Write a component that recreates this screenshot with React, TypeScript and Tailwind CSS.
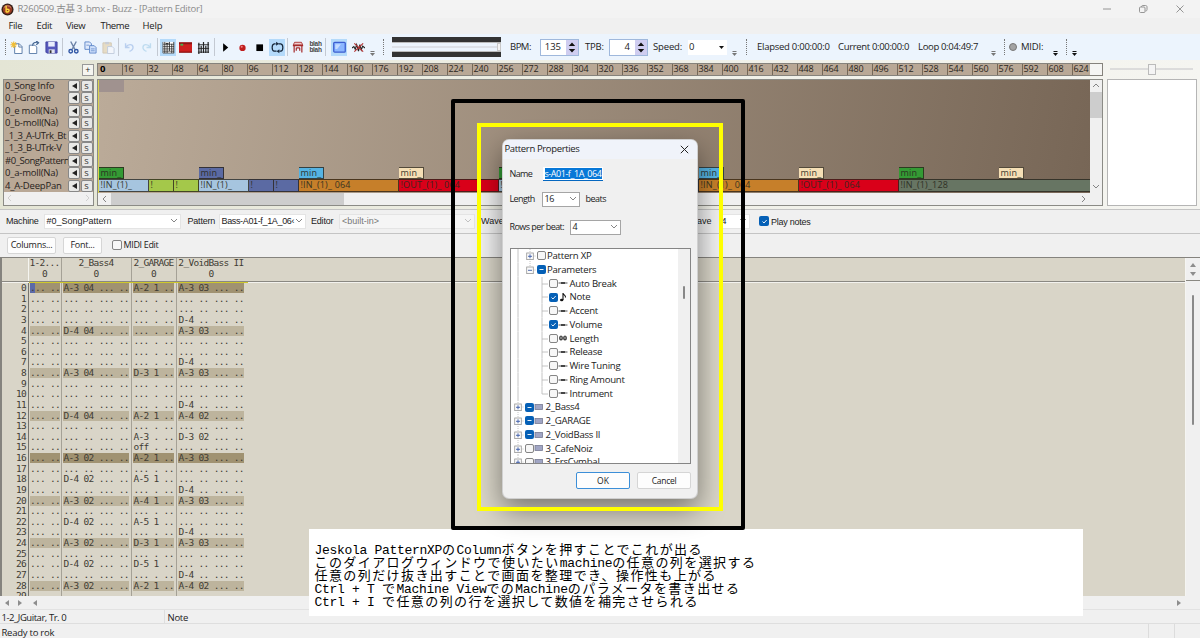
import type { ReactNode } from "react";

const UI = "font-['Open_Sans','Noto_Sans','Noto_Sans_CJK_JP',sans-serif]";

function Cell({ w, children, on }: { w: string; children?: ReactNode; on?: boolean }) {
  return (
    <div className={`${w} flex h-[17px] shrink-0 items-center justify-center`}>
      <div className={`flex h-[17px] w-[16px] shrink-0 items-center justify-center ${on ? "bg-[#b4dafa]" : ""}`}>{children}</div>
    </div>
  );
}

const Sep = ({ w }: { w: string }) => (
  <div className={`${w} flex shrink-0 justify-center`}>
    <div className="h-[18px] w-px bg-[#c3c9d2]" />
  </div>
);

const Grip = ({ w = "w-[6px]" }: { w?: string }) => (
  <div className={`${w} flex shrink-0 justify-center`}>
    <div className="h-[16px] w-0 border-l-[1.5px] border-dotted border-[#777]" />
  </div>
);

const Overflow = ({ w = "w-[8px]", c = "#777" }: { w?: string; c?: string }) => (
  <div className={`${w} flex h-full shrink-0 items-end justify-center pb-[4px]`}>
    <svg width="5" height="5" viewBox="0 0 5 5">
      <path d="M.5 .5h4" stroke={c} />
      <path d="M0 2h5L2.5 5z" fill={c} />
    </svg>
  </div>
);

const Chevron = ({ c = "#777", d = "M1 2l3 3 3-3" }: { c?: string; d?: string }) => (
  <svg width="8" height="8" viewBox="0 0 8 8" fill="none" className="shrink-0">
    <path d={d} stroke={c} strokeWidth="0.9" />
  </svg>
);

const Ic = ({ children, s = 13 }: { children: ReactNode; s?: number }) => (
  <svg width={s} height={s} viewBox="0 0 14 14" fill="none" className="shrink-0">
    {children}
  </svg>
);

function Spin({ v }: { v: string }) {
  return (
    <div className="flex h-[17px] w-[39px] shrink-0 border border-[#9fb8dc] bg-white">
      <span className="flex-1 pr-[5px] text-right leading-[14px]">{v}</span>
      <div className="flex w-[12px] items-center justify-center bg-[#cfcdf0]">
        <svg width="8" height="13" viewBox="0 0 8 13">
          <path d="M4 1.5l3.2 3.4H.8zM4 11.5l3.2-3.4H.8z" fill="#111" />
        </svg>
      </div>
    </div>
  );
}

function Toolbar() {
  return (
    <div className="flex h-[26px] shrink-0 items-center bg-[#ecf4fd] text-[9.500px] text-[#222]">
      <div className="w-[3px]" />
      <Grip w="w-[5px]" />
      <Cell w="w-[17px]">
        <Ic>
          <path d="M5 3h5l3 3v7.500H5z" fill="#fff" stroke="#5679a6" />
          <path d="M9.500 3v3.500H13" stroke="#5679a6" />
          <path d="M4 .5v7M.5 4h7M1.500 1.500l5 5M6.500 1.500l-5 5" stroke="#f0bd35" strokeWidth="1.200" />
        </Ic>
      </Cell>
      <Cell w="w-[17px]">
        <Ic>
          <path d="M2.500 4.500h6l2 2v7h-8z" fill="#fff" stroke="#5679a6" />
          <path d="M6 5c0-3 3-4 5-3.500M10 0l2.500 1.800L10 4" stroke="#41638f" strokeWidth="1.200" />
        </Ic>
      </Cell>
      <Cell w="w-[19px]">
        <Ic>
          <path d="M1 1h12v12H2l-1-1z" fill="#5659bd" stroke="#3f3f9c" />
          <path d="M3.500 1h7v5h-7z" fill="#e9edfc" />
          <path d="M4 9h6.500v4H4z" fill="#dfe2ef" />
          <path d="M5 10h2v3H5z" fill="#333" />
        </Ic>
      </Cell>
      <Sep w="w-[3px]" />
      <Cell w="w-[18px]">
        <Ic>
          <path d="M4 .5l4.500 8.500M10 .5L5.500 9" stroke="#6c83a8" strokeWidth="1.500" />
          <circle cx="4" cy="11" r="1.900" stroke="#2f56a5" strokeWidth="1.500" />
          <circle cx="10" cy="11" r="1.900" stroke="#2f56a5" strokeWidth="1.500" />
        </Ic>
      </Cell>
      <Cell w="w-[17px]">
        <Ic>
          <path d="M1 1h5l2 2v6H1z" fill="#dfeafc" stroke="#5e87c9" />
          <path d="M6 5h5l2 2v6H6z" fill="#cfe0fb" stroke="#5e87c9" />
          <path d="M7.500 8.500h4M7.500 10.500h4M2.500 4.500h3" stroke="#5e87c9" strokeWidth=".8" />
        </Ic>
      </Cell>
      <Cell w="w-[18px]">
        <Ic>
          <path d="M1 2h9v11H1z" fill="#e6dcc5" stroke="#d2c8b4" />
          <path d="M3.500 1h4v2.500h-4z" fill="#c9cdd5" />
          <path d="M6 6h5l2 2v5.500H6z" fill="#f3f6fb" stroke="#c0cbdc" />
        </Ic>
      </Cell>
      <Sep w="w-[3px]" />
      <Cell w="w-[18px]">
        <Ic s={11}>
          <path d="M2 1.500V7h5M2.500 6.500C5 2.500 11 2 11.500 6.500c.2 3-2 4.500-4.500 5.500" stroke="#b9cfef" strokeWidth="1.800" />
        </Ic>
      </Cell>
      <Cell w="w-[17px]">
        <Ic s={11}>
          <path d="M12 1.500V7H7M11.500 6.500C9 2.500 3 2 2.500 6.500c-.2 3 2 4.500 4.500 5.500" stroke="#bfdcf0" strokeWidth="1.800" />
        </Ic>
      </Cell>
      <Sep w="w-[4px]" />
      <Cell w="w-[18px]" on>
        <Ic>
          <path d="M1 1h12v12H1z" fill="#fff" />
          <path d="M1 1v12h12M1 3.500h12M1 6h12M1 8.500h12M1 11h12" stroke="#444" strokeWidth=".8" />
          <path d="M3 1v12M5.500 3v10M8 1v10M10.500 3v10M12.700 1v12" stroke="#222" strokeWidth=".9" />
          <path d="M4 2h3v1.500H4z" fill="#333" />
        </Ic>
      </Cell>
      <Cell w="w-[17px]">
        <Ic>
          <path d="M0 1.500h14v11H0z" fill="#ce1f1f" />
          <path d="M0 1.500h14v2H0z" fill="#8b1515" />
          <path d="M1.500 3h3v2h-3z" fill="#46b34d" />
          <path d="M0 12h14" stroke="#771111" />
        </Ic>
      </Cell>
      <Cell w="w-[18px]">
        <Ic>
          <path d="M1 4h12M1 8h12M1 12h12" stroke="#333" strokeWidth="1" />
          <path d="M2 2v12M4.500 5v8M7 1v12M9.500 5v8M12 1v12" stroke="#222" strokeWidth="1.300" />
        </Ic>
      </Cell>
      <Sep w="w-[4px]" />
      <Cell w="w-[18px]">
        <Ic s={11}>
          <path d="M4 1.500L10.500 7 4 12.500z" fill="#000" />
        </Ic>
      </Cell>
      <Cell w="w-[16px]">
        <Ic s={11}>
          <circle cx="7" cy="7.500" r="4" fill="#c01d1d" />
          <circle cx="6" cy="6" r="1.300" fill="#ef8080" />
        </Ic>
      </Cell>
      <Cell w="w-[18px]">
        <Ic s={11}>
          <path d="M3 3h8.500v8.500H3z" fill="#000" />
        </Ic>
      </Cell>
      <Cell w="w-[18px]" on>
        <Ic>
          <path d="M5 3H3.500C.5 3.500.5 10.500 3.500 11H6M9 11h1.500c3-.5 3-7.500 0-8H8" stroke="#16263a" strokeWidth="1.300" />
          <path d="M5.500 .8L8.500 3 5.500 5.200zM9 8.800L6 11l3 2.200z" fill="#16263a" />
        </Ic>
      </Cell>
      <Sep w="w-[3px]" />
      <Cell w="w-[18px]">
        <Ic s={12}>
          <path d="M1.500 4.500L3 1.500h8l1.500 3z" fill="#f3caca" stroke="#a52a2a" />
          <path d="M1 5.500h12M2.500 5.500v8M11.500 5.500v8M5 8v3.500M9 8v3.500M5 8h4" stroke="#a52a2a" strokeWidth="1.400" />
        </Ic>
      </Cell>
      <Cell w="w-[17px]">
        <div className="text-center font-['Liberation_Sans',sans-serif] text-[6.500px] leading-[6.500px] font-bold tracking-[-0.300px] text-[#444]">
          <div>blah</div>
          <div>blah</div>
        </div>
      </Cell>
      <Sep w="w-[3px]" />
      <div className="w-[3px]" />
      <Cell w="w-[18px]" on>
        <Ic>
          <rect x=".8" y="1.500" width="12.400" height="10.500" rx="1" fill="#8bb6ff" stroke="#3c5ed0" strokeWidth="1.400" />
          <path d="M2.500 3.500h6l-4 5h-2z" fill="#c6dcff" />
        </Ic>
      </Cell>
      <Cell w="w-[20px]">
        <Ic>
          <path d="M0 7.500l2-1.500 1.500 3L5 4l2 7 1.500-7L10 9.500l1.500-4L14 7.500" stroke="#222" strokeWidth="1.200" />
          <path d="M2.500 2.500l9.500 9M12 2.500l-9.500 9" stroke="#b53434" strokeWidth="1.300" />
        </Ic>
      </Cell>
      <Overflow w="w-[9px]" />
      <div className="w-[3px]" />
      <Grip />
      <div className="ml-[6px] flex h-[20px] w-[109px] shrink-0 flex-col justify-between">
        <div className="h-[6px] border-b border-[#bbb] bg-[#333]" />
        <div className="flex h-[8px] items-center">
          <div className="h-[2px] flex-1 bg-[#dde1e8]" />
          <div className="h-[8px] w-[4px] border border-[#c8c8c8] bg-[#f4f4f4]" />
        </div>
        <div className="h-[6px] border-t border-[#bbb] bg-[#333]" />
      </div>
      <span className="w-[39px] shrink-0 pl-[9px] tracking-[-0.500px]">BPM:</span>
      <Spin v="135" />
      <span className="w-[30px] shrink-0 pl-[6px] tracking-[-0.200px]">TPB:</span>
      <Spin v="4" />
      <span className="w-[40px] shrink-0 pl-[5px] tracking-[-0.150px] whitespace-nowrap">Speed:</span>
      <div className="flex h-[15px] w-[39px] shrink-0 items-center justify-between bg-white pr-[3px] pl-px">
        <span className="-mt-px leading-[13px]">0</span>
        <svg width="5" height="3" viewBox="0 0 5 3">
          <path d="M0 0h5L2.500 3z" fill="#111" />
        </svg>
      </div>
      <div className="w-[3px]" />
      <Overflow />
      <div className="w-[5px]" />
      <Grip />
      <span className="w-[89px] shrink-0 pl-[8px] tracking-[-0.260px] whitespace-nowrap">Elapsed 0:00:00:0</span>
      <span className="w-[80px] shrink-0 tracking-[-0.330px] whitespace-nowrap">Current 0:00:00:0</span>
      <span className="w-[71px] shrink-0 tracking-[-0.330px] whitespace-nowrap">Loop 0:04:49:7</span>
      <Overflow />
      <div className="w-[4px]" />
      <Grip />
      <div className="ml-[2px] h-[8px] w-[8px] shrink-0 rounded-full border border-[#777] bg-[#a3a3a3]" />
      <span className="w-[34px] shrink-0 pl-[4px] tracking-[-0.200px]">MIDI:</span>
      <Overflow c="#111" />
      <div className="w-[4px]" />
      <Grip />
      <Overflow w="w-[10px]" c="#111" />
    </div>
  );
}

const tracks = ["0_Song Info", "0_I-Groove", "0_e moll(Na)", "0_b-moll(Na)", "_1_3_A-UTrk_Bt", "_1_3_B-UTrk-V", "#0_SongPattern", "0_a-moll(Na)", "4_A-DeepPan"];

type Clip = [width: string, color: string, label: string];
const minClips: Clip[] = [
  ["w-[25px]", "bg-[#349a34]", "min_"],
  ["w-[75px]", "", ""],
  ["w-[25px]", "bg-[#5b6aa3]", "min_"],
  ["w-[75px]", "", ""],
  ["w-[25px]", "bg-[#55b3e2]", "min_"],
  ["w-[75px]", "", ""],
  ["w-[25px]", "bg-[#f5dfb5]", "min_"],
  ["w-[75px]", "", ""],
  ["w-[25px]", "bg-[#349a34]", " "],
  ["w-[175px]", "", ""],
  ["w-[25px]", "bg-[#55b3e2]", "min_"],
  ["w-[75px]", "", ""],
  ["w-[25px]", "bg-[#f5dfb5]", "min_"],
  ["w-[75px]", "", ""],
  ["w-[25px]", "bg-[#349a34]", "min_"],
  ["w-[75px]", "", ""],
  ["w-[25px]", "bg-[#f5dfb5]", "min_"],
];
const songClips: Clip[] = [
  ["w-[50px]", "bg-[#a6c5df]", "!IN_(1)_"],
  ["w-[25px]", "bg-[#a4c84a]", "!"],
  ["w-[25px]", "bg-[#a4c84a]", "!"],
  ["w-[50px]", "bg-[#a6c5df]", "!IN_(1)_"],
  ["w-[25px]", "bg-[#5b6aa3]", "!"],
  ["w-[25px]", "bg-[#5b6aa3]", "!"],
  ["w-[100px]", "bg-[#c67f2a]", "!IN_(1)_ 064"],
  ["w-[100px]", "bg-[#d90019]", "!OUT_(1)_ 064"],
  ["w-[100px]", "bg-[#a6c5df]", "!"],
  ["w-[100px]", "bg-[#5b6aa3]", " "],
  ["w-[100px]", "bg-[#c67f2a]", "!IN_(1)_ 064"],
  ["w-[100px]", "bg-[#d90019]", "!OUT_(1)_ 064"],
  ["w-[192px]", "bg-[#677563]", "!IN_(1)_128"],
];

function Clips({ list }: { list: Clip[] }) {
  return (
    <div className="flex h-[12.500px] shrink-0 text-[9px] leading-[9px] text-[#2b2b20]">
      {list.map(([w, c, t], i) =>
        t ? (
          <div key={i} className={`${w} ${c} shrink-0 border-t border-r border-b border-[#2a241c]/80 pl-[1.500px] tracking-[0.200px] whitespace-nowrap`}>
            <span className="opacity-90">{t}</span>
          </div>
        ) : (
          <div key={i} className={`${w} shrink-0`} />
        ),
      )}
    </div>
  );
}

const beats = Array.from({ length: 40 }, (_, i) => i * 16);

function Sequencer() {
  return (
    <div className="flex h-[149px] shrink-0 bg-linear-to-r from-[#e4e5d5] via-[#efefe6] to-[#f5f5f1] pt-[2.500px]">
      <div className="flex w-[97px] shrink-0 flex-col pl-[3px]">
        <div className="flex h-[16px] justify-end pr-[3.500px]">
          <div className="mt-px h-[12px] w-[11.500px] border border-[#999] bg-[#f5f5f0] text-center text-[9px] leading-[10px]">+</div>
        </div>
        <div className="flex h-[127px] w-[91px] flex-col border border-[#8b8b86] bg-[#b9a896]">
          {tracks.map((t) => (
            <div key={t} className="flex h-[12.500px] items-center text-[9.500px] text-[#27221c]">
              <span className={`w-[64px] shrink-0 pl-[1px] leading-[12px] whitespace-nowrap ${t.length > 12 ? "tracking-[-0.450px]" : "tracking-[-0.200px]"}`}>{t}</span>
              <div className="flex h-[12px] w-[12px] shrink-0 items-center justify-center rounded-[2px] border border-[#888] bg-[#e8e8e6]">
                <svg width="5" height="6" viewBox="0 0 5 6">
                  <path d="M5 0v6L0 3z" fill="#222" />
                </svg>
              </div>
              <div className="ml-[0.500px] h-[12px] w-[12px] shrink-0 rounded-[2px] border border-[#888] bg-[#e8e8e6] text-center text-[8px] leading-[10px]">S</div>
            </div>
          ))}
          <div className="flex flex-1 items-center justify-between bg-[#f0f0f0] px-[2px]">
            <Chevron c="#ccc" d="M5 1L2 4l3 3" />
            <Chevron c="#ccc" d="M3 1l3 3-3 3" />
          </div>
        </div>
      </div>
      <div className="flex w-[1006px] shrink-0 flex-col">
        <div className="flex h-[13px] w-[1006px] border border-[#85827c] bg-[#f5f5f3] text-[9px] leading-[10px] text-[#2c2620]">
          {beats.map((b) => (
            <div
              key={b}
              className={`h-full shrink-0 border-r border-[#746859] bg-[#b9a896] ${b === 0 ? "w-[25px] pl-[2px] text-[9.500px] font-bold text-black" : b === 624 ? "w-[17px] border-r-0 pl-[0.500px] tracking-[-0.100px]" : "w-[25px] pl-[0.500px] tracking-[-0.100px]"}`}
            >
              {b}
            </div>
          ))}
        </div>
        <div className="h-[3px]" />
        <div className="flex h-[127px] w-[1006px] flex-col border border-[#8b8b86]">
          <div className="flex h-[113px]">
            <div className="flex w-[992px] flex-col overflow-hidden border-l border-[#d9d34a] bg-linear-[100deg] from-[#bbab99] to-[#776656]">
              <div className="h-[12.500px] w-[25px] bg-[#a0928f]" />
              <div className="h-[74.500px]" />
              <Clips list={minClips} />
              <Clips list={songClips} />
            </div>
            <div className="flex w-[12px] flex-col items-center bg-[#f0f0f0] pb-[2px]">
              <div className="flex h-[12px] shrink-0 items-center">
                <Chevron d="M1 5l3-3 3 3" />
              </div>
              <div className="h-[26px] w-full shrink-0 bg-[#cdcdcd]" />
              <div className="flex-1" />
              <Chevron />
            </div>
          </div>
          <div className="flex h-[12px] items-center bg-[#f0f0f0]">
            <div className="flex w-[13px] justify-center">
              <Chevron d="M5 1L2 4l3 3" />
            </div>
            <div className="h-full w-[233px] bg-[#cdcdcd]" />
            <div className="flex-1" />
            <div className="mr-[15px]">
              <Chevron d="M3 1l3 3-3 3" />
            </div>
          </div>
        </div>
      </div>
      <div className="flex flex-col pl-[3.500px]">
        <div className="flex h-[16px] items-center px-[3px] pb-[3px]">
          <div className="h-[2px] w-[38px] bg-[#dcdcdc]" />
          <div className="h-[11px] w-[8px] border border-[#bbb] bg-[#f4f4f4]" />
          <div className="h-[2px] w-[37px] bg-[#dcdcdc]" />
        </div>
        <div className="h-[127px] w-[90px] border border-[#b5b5b5] bg-white" />
      </div>
    </div>
  );
}

function Select({ w, v, dim }: { w: string; v: string; dim?: boolean }) {
  return (
    <div className={`${w} flex h-[15px] shrink-0 items-center justify-between border border-[#e4e4e4] pr-[2px] pl-[2px] whitespace-nowrap ${dim ? "bg-[#f5f5f5] text-[#777]" : "bg-white"}`}>
      <span className={v.length > 15 ? "tracking-[-0.350px]" : ""}>{v}</span>
      <Chevron c={dim ? "#bbb" : "#777"} />
    </div>
  );
}

function Check({ state, s = "h-[9px] w-[9px]" }: { state?: "on" | "mixed"; s?: string }) {
  return (
    <div className={`${s} flex shrink-0 items-center justify-center rounded-[2px] ${state ? "bg-[#0560b6]" : "border border-[#858585] bg-[#f7f7f7]"}`}>
      {state && (
        <svg width="7" height="7" viewBox="0 0 7 7" fill="none">
          <path d={state === "on" ? "M1.500 3.500l1.500 1.500 2.700-3" : "M1.500 3.500h4"} stroke="#fff" strokeWidth=".9" />
        </svg>
      )}
    </div>
  );
}

const E1 = "... ..";
const E2 = "... .. ... ..";
const E3 = "... . ..";
const pattern: Record<number, [string?, string?, string?]> = {
  0: ["A-3 04 ... ..", "A-2 1 ..", "A-3 03 ... .."],
  3: [, , "D-4 .. ... .."],
  4: ["D-4 04 ... ..", , "A-3 03 ... .."],
  7: [, , "D-4 .. ... .."],
  8: ["A-3 04 ... ..", "D-3 1 ..", "A-3 03 ... .."],
  11: [, , "D-4 .. ... .."],
  12: ["D-4 04 ... ..", "A-2 1 ..", "A-4 02 ... .."],
  14: [, "A-3 . ..", "D-3 02 ... .."],
  15: [, "off . .."],
  16: ["A-3 02 ... ..", "A-2 1 ..", "A-3 03 ... .."],
  18: ["D-4 02 ... ..", "A-5 1 .."],
  19: [, , "D-4 .. ... .."],
  20: ["A-3 02 ... ..", "A-4 1 ..", "A-3 03 ... .."],
  22: ["D-4 02 ... ..", "A-5 1 .."],
  23: [, , "D-4 .. ... .."],
  24: ["A-3 02 ... ..", "D-3 1 ..", "A-3 03 ... .."],
  26: ["D-4 02 ... ..", "D-5 1 .."],
  27: [, , "D-4 .. ... .."],
  28: ["A-3 02 ... ..", "A-2 1 ..", "A-4 02 ... .."],
};

const Tri = ({ d }: { d: string }) => (
  <svg width="6" height="6" viewBox="0 0 6 6" className="shrink-0">
    <path d={d} fill="#8d8d8d" />
  </svg>
);
const LEFT = "M5 0v6L1 3z";
const RIGHT = "M1 0v6l4-3z";

function PatternEditor() {
  const heads = [
    ["w-[33px]", "1-2..."],
    ["w-[70px]", "2_Bass4"],
    ["w-[45px]", "2_GARAGE"],
    ["w-[69px]", "2_VoidBass II"],
  ];
  return (
    <div className="flex h-[339px] shrink-0 border-t border-l-2 border-[#85837e] bg-[#d9d5c8] font-['DejaVu_Sans_Mono',monospace] text-[9.500px] tracking-[-0.700px] text-[#3f3c34]">
      <div className="flex flex-1 flex-col overflow-hidden">
        <div className="flex h-[23.500px] shrink-0 border-b border-[#8a8882]">
          <div className="w-[26.500px] shrink-0 border-r border-[#f5f5f0]" />
          {heads.map(([w, t], i) => (
            <div key={t} className={`${w} shrink-0 text-center leading-[10.600px] whitespace-nowrap ${i < 3 ? "border-r border-[#a5a196]" : ""}`}>
              {t}
              <br />0
            </div>
          ))}
        </div>
        <div className="h-[1.500px] shrink-0 bg-[#f3f2ee]">
          <div className="ml-[27px] h-[1.500px] w-[219px] bg-[#cfc92c]" />
        </div>
        <div className="flex-1 overflow-hidden">
          {Array.from({ length: 30 }, (_, r) => {
            const p = pattern[r] ?? [];
            const bg = r % 16 === 0 ? "bg-[#a09271]" : r % 4 === 0 ? "bg-[#bdb49d]" : "";
            return (
              <div key={r} className="flex h-[10.640px] leading-[10.300px] whitespace-pre">
                <div className="w-[27px] shrink-0 border-r border-[#77756f] pr-[2px] text-right">{r}</div>
                <div className="w-[32.500px] shrink-0 border-r border-[#a5a196]">
                  <div className={`ml-[0.500px] h-[10px] w-[30px] pl-[0.500px] ${bg}`}>
                    {r === 0 ? (
                      <>
                        <span className="bg-[#5b6aa8]">.</span>.. ..
                      </>
                    ) : (
                      E1
                    )}
                  </div>
                </div>
                <div className="w-[70px] shrink-0 border-r border-[#a5a196] pl-[1.500px]">
                  <div className={`h-[10px] w-[66px] pl-[0.500px] ${bg}`}>{p[0] ?? E2}</div>
                </div>
                <div className="w-[45px] shrink-0 border-r border-[#a5a196] pl-[1.500px]">
                  <div className={`h-[10px] w-[41px] pl-[0.500px] ${bg}`}>{p[1] ?? E3}</div>
                </div>
                <div className="shrink-0 pl-[1.500px]">
                  <div className={`h-[10px] w-[66px] pl-[0.500px] ${bg}`}>{p[2] ?? E2}</div>
                </div>
              </div>
            );
          })}
        </div>
      </div>
      <div className="flex w-[15px] shrink-0 flex-col items-center border-l border-[#f5f5f2] bg-[#f0f0f0]">
        <div className="flex h-[23px] w-full flex-col items-center justify-between border-b border-[#8a8882] py-[3.500px]">
          <Tri d="M0 5h6L3 1z" />
          <Tri d="M0 1h6L3 5z" />
        </div>
        <div className="mt-[14px] h-[130px] w-[2px] rounded bg-[#8a8a8a]" />
      </div>
    </div>
  );
}

type Node = { t: string; l: 0 | 1 | 2; s?: "on" | "mixed"; icon?: "line" | "note" | "num" | "box"; open?: boolean; last?: boolean };
const nodes: Node[] = [
  { t: "Pattern XP", l: 1 },
  { t: "Parameters", l: 1, s: "mixed", open: true },
  { t: "Auto Break", l: 2, icon: "line" },
  { t: "Note", l: 2, s: "on", icon: "note" },
  { t: "Accent", l: 2, icon: "line" },
  { t: "Volume", l: 2, s: "on", icon: "line" },
  { t: "Length", l: 2, icon: "num" },
  { t: "Release", l: 2, icon: "line" },
  { t: "Wire Tuning", l: 2, icon: "line" },
  { t: "Ring Amount", l: 2, icon: "line" },
  { t: "Intrument", l: 2, icon: "line", last: true },
  { t: "2_Bass4", l: 0, s: "mixed", icon: "box" },
  { t: "2_GARAGE", l: 0, s: "mixed", icon: "box" },
  { t: "2_VoidBass II", l: 0, s: "mixed", icon: "box" },
  { t: "3_CafeNoiz", l: 0, icon: "box" },
  { t: "3_ErsCymbal", l: 0, icon: "box" },
];

const Guide = ({ d }: { d: string }) => (
  <svg width="12" height="13.75" viewBox="0 0 12 13.75" className="shrink-0" fill="none">
    <path d={d} stroke="#b5b5b5" strokeWidth=".8" />
  </svg>
);

const Expander = ({ open }: { open?: boolean }) => (
  <svg width="12" height="13.75" viewBox="0 0 12 13.75" className="shrink-0" fill="none">
    <path d={open ? "M6 0v7M9.500 7H12" : "M6 0v13.750M9.500 7H12"} stroke="#b5b5b5" strokeWidth=".8" strokeDasharray="1 1" />
    <rect x="2.700" y="4" width="6.600" height="6.600" fill="#fbfbfb" stroke="#969696" strokeWidth=".8" />
    <path d={open ? "M4 7.300h4" : "M4 7.300h4M6 5.300v4"} stroke="#3a5aa8" strokeWidth=".9" />
  </svg>
);

function NodeIcon({ k }: { k?: Node["icon"] }) {
  if (!k) return null;
  return (
    <svg width="10" height="10" viewBox="0 0 10 10" className="ml-[0.500px] shrink-0" fill="none">
      {k === "line" && (
        <>
          <path d="M.5 5h9" stroke="#555" strokeWidth="1" />
          <path d="M3 5h4" stroke="#333" strokeWidth="1.700" />
        </>
      )}
      {k === "note" && (
        <>
          <path d="M5 8V1c0 2 3 2 2.500 4.500" stroke="#111" strokeWidth="1.100" />
          <ellipse cx="3.700" cy="8" rx="1.700" ry="1.300" fill="#111" />
        </>
      )}
      {k === "num" && (
        <>
          <ellipse cx="3" cy="5" rx="1.300" ry="2" stroke="#222" strokeWidth="1.100" />
          <ellipse cx="7" cy="5" rx="1.300" ry="2" stroke="#222" strokeWidth="1.100" />
          <path d="M2 5h2M6 5h2" stroke="#222" strokeWidth=".7" />
        </>
      )}
      {k === "box" && <rect x="1" y="2.500" width="7.500" height="5" fill="#a0a5c4" stroke="#777b92" strokeWidth=".8" />}
    </svg>
  );
}

function Dialog() {
  return (
    <div className="absolute top-[139px] left-[502px] flex h-[359.500px] w-[196px] flex-col overflow-hidden rounded-[7px] border border-[#bbb]/60 bg-[#f0f0f0] text-[9px] text-[#222] shadow-[0_11px_28px_rgba(0,0,0,0.45)]">
      <div className="flex h-[19px] shrink-0 items-center justify-between bg-[#f0f3fa] pr-[8px] pl-[1.500px] text-[9.500px]">
        <span className="tracking-[-0.350px]">Pattern Properties</span>
        <svg width="9" height="9" viewBox="0 0 9 9">
          <path d="M.8.8l7.400 7.400M8.200.8L.8 8.200" stroke="#222" strokeWidth="1" />
        </svg>
      </div>
      <div className="flex h-[29px] shrink-0 items-center pl-[6.500px]">
        <span className="w-[33px] tracking-[-0.600px]">Name</span>
        <div className="flex h-[14px] w-[60px] items-center border-b border-[#0567c0] bg-white pl-[2px]">
          <span className="w-[57px] bg-[#0878d7] leading-[11px] tracking-[-0.450px] whitespace-nowrap text-white">s-A01-f_1A_064</span>
        </div>
      </div>
      <div className="flex h-[22px] shrink-0 items-center pl-[6.500px]">
        <span className="w-[32px] tracking-[-0.600px]">Length</span>
        <div className="flex h-[15px] w-[38px] items-center justify-between border border-[#a5a5a5] bg-white pr-[2px] pl-[2px]">
          <span className="-mt-px leading-[12px] tracking-[-0.300px]">16</span>
          <Chevron />
        </div>
        <span className="pl-[6px] tracking-[-0.500px]">beats</span>
      </div>
      <div className="flex h-[34px] shrink-0 items-center pl-[6.500px]">
        <span className="w-[60px] tracking-[-0.550px] whitespace-nowrap">Rows per beat:</span>
        <div className="flex h-[15px] w-[51px] items-center justify-between border border-[#a5a5a5] bg-white pr-[2px] pl-[2px]">
          <span className="-mt-px leading-[12px]">4</span>
          <Chevron />
        </div>
      </div>
      <div className="mt-[4px] ml-[7px] flex h-[216px] w-[181px] shrink-0 overflow-hidden border border-[#858585] bg-white text-[9.600px]">
        <div className="flex flex-1 flex-col overflow-hidden pl-[0.500px]">
          {nodes.map((n) => (
            <div key={n.t} className="flex h-[13.750px] shrink-0 items-center leading-[13.750px]">
              {n.l === 0 ? <Expander /> : <Guide d="M6 0v13.750" />}
              {n.l === 1 && <Expander open={n.open} />}
              {n.l === 2 && (
                <>
                  <Guide d="" />
                  <Guide d={n.last ? "M6 0v7h6" : "M6 0v13.750M6 7h6"} />
                </>
              )}
              <div className="ml-[1px] flex items-center">
                <Check state={n.s} />
                <NodeIcon k={n.icon} />
                <span className="ml-[1.500px] tracking-[-0.250px] whitespace-nowrap">{n.t}</span>
              </div>
            </div>
          ))}
        </div>
        <div className="flex w-[12px] justify-center bg-[#f0f0f0] pt-[37px]">
          <div className="h-[13px] w-[2px] rounded bg-[#888]" />
        </div>
      </div>
      <div className="mt-[8px] flex shrink-0 justify-end gap-[7px] pr-[6px]">
        <div className="h-[17px] w-[54px] rounded-[2px] border border-[#3c8fd8] bg-[#fdfdfd] text-center text-[8.500px] leading-[15px]">OK</div>
        <div className="h-[17px] w-[54px] rounded-[2px] border border-[#d5d5d5] bg-[#fdfdfd] text-center text-[8.500px] leading-[15px] tracking-[-0.300px]">Cancel</div>
      </div>
    </div>
  );
}

const notes = [
  "Jeskola PatternXPのColumnボタンを押すことでこれが出る",
  "このダイアログウィンドウで使いたいmachineの任意の列を選択する",
  "任意の列だけ抜き出すことで画面を整理でき、操作性も上がる",
  "Ctrl + T でMachine ViewでのMachineのパラメータを書き出せる",
  "Ctrl + I で任意の列の行を選択して数値を補完させられる",
];

function Memo() {
  return (
    <div className="absolute top-[529px] left-[309px] h-[87px] w-[774px] bg-white pt-[12.500px] pl-[5.500px] text-black">
      {notes.map((line) => (
        <div key={line} className="flex h-[13.150px] items-baseline leading-[13.150px] whitespace-pre">
          {line.split(/([\x20-\x7e]+)/).map((part, i) =>
            part === "" ? null : i % 2 ? (
              <span key={i} className="font-['Liberation_Mono',monospace] text-[13px] tracking-[-0.300px]">
                {part}
              </span>
            ) : (
              <span key={i} className="font-['Noto_Sans_CJK_JP',sans-serif] text-[13px] tracking-[1.420px]">
                {part}
              </span>
            ),
          )}
        </div>
      ))}
    </div>
  );
}

export default function App() {
  return (
    <div className={`relative flex h-[638px] w-[1200px] flex-col overflow-hidden bg-[#f0f0f0] text-[9.500px] text-[#222] ${UI}`}>
      <div className="flex h-[18px] shrink-0 items-center bg-[#f3f3f3] pl-[1px] text-[#8b8b8b]">
        <svg width="13" height="13" viewBox="0 0 14 14">
          <circle cx="7" cy="7" r="6.500" fill="#352018" />
          <circle cx="7" cy="7" r="5" fill="#9b3b23" />
          <path d="M3 5a5 5 0 018 0" stroke="#d99b80" fill="none" />
          <path d="M5.500 3v7M5.500 7.200c4-2 4.500 3 0 2.600" stroke="#ffd83b" strokeWidth="1.500" fill="none" />
        </svg>
        <span className="ml-[3.500px] flex-1 text-[9.500px] tracking-[-0.280px] whitespace-nowrap">R260509.古基３.bmx - Buzz - [Pattern Editor]</span>
        <svg width="84" height="10" viewBox="0 0 84 10" fill="none" stroke="#8b8b8b" strokeWidth=".9" className="mr-[15px]">
          <path d="M2 5h8M75.500 1.500l7 7M82.500 1.500l-7 7" />
          <rect x="38.500" y="3" width="5.500" height="5.500" rx="1" />
          <path d="M40.500 3c0-1 .3-1.500 1.500-1.500h2.500c1 0 1.500.5 1.500 1.500v2.500c0 1-.5 1.500-1.500 1.500" />
        </svg>
      </div>
      <div className="flex h-[16px] shrink-0 items-center text-[9.500px] tracking-[-0.350px]">
        <span className="w-[36.500px] pl-[8.500px]">File</span>
        <span className="w-[29.500px]">Edit</span>
        <span className="w-[34.500px]">View</span>
        <span className="w-[42px]">Theme</span>
        <span className="tracking-[-0.150px]">Help</span>
      </div>
      <Toolbar />
      <Sequencer />
      <div className="flex h-[24.500px] shrink-0 items-center border-t border-b border-[#c4c4c4] font-['Liberation_Sans','Noto_Sans',sans-serif] text-[9px]">
        <span className="w-[43.500px] shrink-0 pl-[6px] tracking-[-0.200px]">Machine</span>
        <Select w="w-[137.500px]" v="#0_SongPattern" />
        <span className="w-[37.500px] shrink-0 pl-[6.500px] tracking-[-0.200px]">Pattern</span>
        <Select w="w-[87.500px]" v="Bass-A01-f_1A_06‹" />
        <span className="w-[33px] shrink-0 pl-[5px] tracking-[-0.200px]">Editor</span>
        <Select w="w-[136px]" v="<built-in>" dim />
        <span className="w-[203px] shrink-0 pl-[6px]">Wave</span>
        <span className="w-[40.500px] shrink-0 pl-[5px]">Octave</span>
        <Select w="w-[31px]" v="4" />
        <div className="w-[9.500px]" />
        <Check state="on" s="h-[10px] w-[10px]" />
        <span className="pt-[2px] pl-[2px] tracking-[-0.250px]">Play notes</span>
      </div>
      <div className="flex h-[23.500px] shrink-0 items-center pl-[7px] text-[9px]">
        <div className="h-[17px] w-[49px] rounded-[2px] border border-[#d6d6d6] bg-[#fdfdfd] text-center leading-[14px] tracking-[-0.250px]">Columns...</div>
        <div className="ml-[7px] h-[17px] w-[39px] rounded-[2px] border border-[#d6d6d6] bg-[#fdfdfd] text-center leading-[14px] tracking-[-0.250px]">Font...</div>
        <div className="w-[9.500px]" />
        <Check s="h-[10px] w-[10px]" />
        <span className="pl-[2px] leading-[14px] tracking-[-0.350px]">MIDI Edit</span>
      </div>
      <PatternEditor />
      <div className="flex h-[14px] shrink-0 items-center border-b border-[#e2e2e2] pl-[4px]">
        <Tri d={LEFT} />
        <div className="w-[7px]" />
        <Tri d={RIGHT} />
        <div className="w-[9px]" />
        <Tri d={LEFT} />
        <div className="flex-1" />
        <Tri d={RIGHT} />
        <div className="w-[18px]" />
      </div>
      <div className="flex h-[14px] shrink-0 items-center border-b border-[#dedede]">
        <span className="h-full w-[164.500px] border-r border-[#dedede] pl-[1.500px] leading-[16px] tracking-[-0.450px]">1-2_JGuitar, Tr. 0</span>
        <span className="h-full pl-[3px] leading-[16px] tracking-[-0.250px]">Note</span>
      </div>
      <div className="flex flex-1 items-center pl-[1.500px]">
        <span className="flex-1 pt-[2px] tracking-[-0.250px]">Ready to rok</span>
        <div className="h-full w-[26px] border-l border-[#dcdcdc]" />
        <div className="h-full w-[26px] border-l border-[#dcdcdc]" />
      </div>
      <Memo />
      <Dialog />
      <div className="absolute top-[99px] left-[451px] h-[431px] w-[293.500px] rounded-[2px] border-[4px] border-black" />
      <div className="absolute top-[123px] left-[477px] h-[388px] w-[246px] border-[4px] border-[#ffff00]" />
    </div>
  );
}
